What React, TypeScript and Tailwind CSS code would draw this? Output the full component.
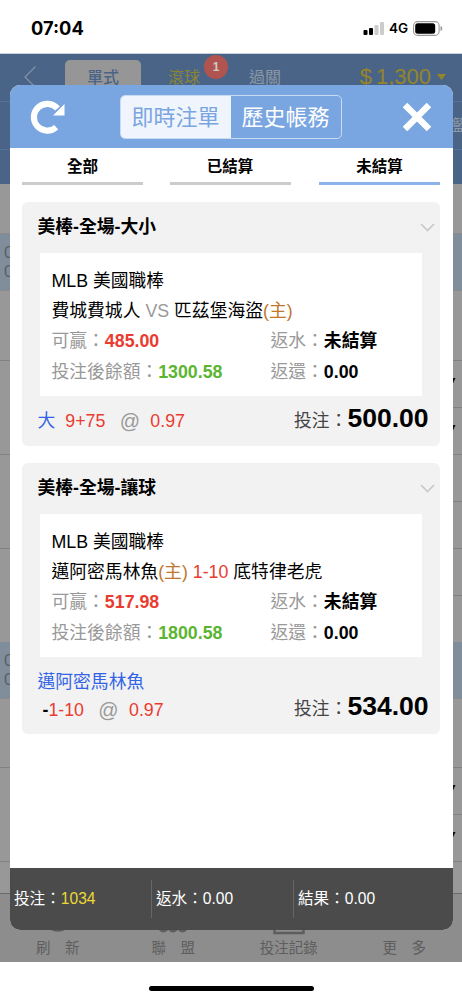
import { useState } from 'react'

type Bet = {
  id: string
  title: string
  league: string
  home: string
  away: string
  homeFirst: boolean
  score: string
  win: string
  balance: string
  pick: string
  line: string
  odds: string
  stake: string
}

const bets: Bet[] = [
  {
    id: 'a',
    title: '美棒-全場-大小',
    league: 'MLB 美國職棒',
    home: '匹茲堡海盜',
    away: '費城費城人',
    homeFirst: false,
    score: 'VS',
    win: '485.00',
    balance: '1300.58',
    pick: '大',
    line: '9+75',
    odds: '0.97',
    stake: '500.00',
  },
  {
    id: 'b',
    title: '美棒-全場-讓球',
    league: 'MLB 美國職棒',
    home: '邁阿密馬林魚',
    away: '底特律老虎',
    homeFirst: true,
    score: '1-10',
    win: '517.98',
    balance: '1800.58',
    pick: '邁阿密馬林魚',
    line: '1-10',
    odds: '0.97',
    stake: '534.00',
  },
]

const filters = ['全部', '已結算', '未結算']

function StatusBar() {
  return (
    <div className="flex h-[54px] items-start justify-between border-b border-[#c5d0dc] bg-white pl-[31px] pr-[19px] font-['Inter']">
      <span className="mt-[15px] text-[18.3px] font-bold leading-[26px] text-black">07:04</span>
      <div className="mt-[20px] flex h-4 items-center">
        <svg width="22" height="14" viewBox="0 0 22 14">
          <rect x="0.5" y="9" width="4" height="5" rx="1" fill="#000" />
          <rect x="6" y="7" width="4" height="7" rx="1" fill="#000" />
          <rect x="11.5" y="4" width="4" height="10" rx="1" fill="#ccc" />
          <rect x="17" y="1" width="4" height="13" rx="1" fill="#ccc" />
        </svg>
        <span className="ml-[4px] w-[19px] text-[13.5px] font-semibold text-black">4G</span>
        <svg className="ml-[5px]" width="30" height="15" viewBox="0 0 30 15">
          <rect x="0.6" y="0.6" width="25.5" height="13.8" rx="4" fill="none" stroke="#999" strokeWidth="1.1" />
          <rect x="2.2" y="2.2" width="20" height="10.6" rx="2.5" fill="#000" />
          <path d="M27.5 5v5c1.4-.5 1.8-1.5 1.8-2.5S28.9 5.5 27.5 5z" fill="#999" />
        </svg>
      </div>
    </div>
  )
}

function Band() {
  return (
    <div className="h-[56px] bg-[#808d9b] pl-[4px] pt-[9px] text-[17px] leading-[19px] text-[#5c6066]">
      <div>0</div>
      <div>0</div>
    </div>
  )
}

function OddsRow({ open }: { open?: boolean }) {
  return (
    <div className="flex h-[94px] justify-end border-t border-[#818181]">
      <div className="flex w-[11px] flex-col">
        <div className="flex-1 border-b border-[#818181] pt-[17px]">{open && <Caret />}</div>
        <div className="flex-1 pt-[17px]">{open && <Caret />}</div>
      </div>
    </div>
  )
}

function Caret() {
  return (
    <svg width="5" height="6" viewBox="0 0 5 6">
      <path d="M0 0h4.6L1.6 6H0z" fill="#111" />
    </svg>
  )
}

// dimmed betting page behind the sheet
function Backdrop() {
  return (
    <div className="bg-[#989898]">
      <div className="h-[130px] bg-[#4a6487]">
        <div className="flex h-[48px] border-b border-[#54719a] text-[16px] leading-[32px]">
          <svg className="ml-[23px] mt-[11px]" width="14" height="24" viewBox="0 0 14 24">
            <path d="M12.5 1.5L2 12l10.5 10.5" fill="none" stroke="#8290a3" strokeWidth="1.3" />
          </svg>
          <div className="ml-[28px] mt-[6px] w-[76px] rounded-t-[5px] bg-[#969696] pt-[2px] text-center font-medium text-[#4a6487]">單式</div>
          <div className="relative ml-[27px] mt-[8px] w-[33px] whitespace-nowrap text-[#8b8434]">
            滾球
            <span className="absolute left-[36px] top-[-7px] h-[24px] w-[24px] rounded-full bg-[#b1544f] text-center text-[12px] font-bold leading-[24px] text-[#ccc]">1</span>
          </div>
          <div className="ml-[48px] mt-[8px] text-[#8c97a6]">過關</div>
          <div className="ml-auto mr-[16px] mt-[7px] flex text-[22px] text-[#958528]">
            <span>$</span>
            <span className="ml-[4px]">1,300</span>
            <svg className="ml-[6px] mt-[13px]" width="9" height="6" viewBox="0 0 9 6">
              <path d="M0 0h9L4.5 6z" fill="#958528" />
            </svg>
          </div>
        </div>
        <div className="flex h-[48px] items-center justify-end border-b border-[#54719a]">
          <div className="w-[10px] whitespace-nowrap text-[16px] text-[#8c97a6]">籃</div>
        </div>
      </div>
      <div className="h-[50px] border-b border-[#8b8b8b]" />
      <Band />
      <div className="h-[70px] border-t border-[#8b8b8b]" />
      <OddsRow open />
      <OddsRow />
      <OddsRow />
      <Band />
      <div className="h-[69px] border-t border-[#8b8b8b]" />
      <OddsRow open />
      <div className="h-[32px] border-t border-[#818181]" />
      <div className="flex h-[69px] border-t border-[#6c6c6c] bg-[#8d8d8d] text-[14.5px] leading-[20px] text-[#5e5e5e]">
        <NavItem label="刷　新">
          <circle cx="17" cy="24" r="12.3" fill="none" stroke="#5e5e5e" strokeWidth="3" />
        </NavItem>
        <NavItem label="聯　盟">
          <g fill="none" stroke="#5e5e5e" strokeWidth="2.5">
            <circle cx="7.5" cy="33" r="4.2" />
            <circle cx="17" cy="33" r="4.2" />
            <circle cx="26.5" cy="33" r="4.2" />
          </g>
        </NavItem>
        <NavItem label="投注記錄">
          <rect x="2.5" y="8" width="29" height="31" fill="none" stroke="#5e5e5e" strokeWidth="2.5" />
        </NavItem>
        <NavItem label="更　多" />
      </div>
    </div>
  )
}

function NavItem({ label, children }: { label: string; children?: React.ReactNode }) {
  return (
    <div className="flex flex-1 flex-col items-center">
      <svg width="34" height="42" viewBox="0 0 34 42">{children}</svg>
      <span className="mt-[2px]">{label}</span>
    </div>
  )
}

function BetCard({ bet }: { bet: Bet }) {
  const home = (
    <>
      {bet.home}
      <span className="text-[#c0762c]">(主)</span>
    </>
  )
  const odds = (
    <>
      <span className="text-[#ea3b30]">{bet.line}</span>
      <span className="w-[45px] pl-[4px] text-center text-[20px] text-[#999]">@</span>
      <span className="text-[#ea3b30]">{bet.odds}</span>
    </>
  )

  return (
    <div className="rounded-[6px] bg-[#f2f2f2] text-[17.8px]">
      <div className="flex h-[51px] items-center justify-between pl-[15.5px] pr-[5px]">
        <h3 className="font-bold text-black">{bet.title}</h3>
        <svg width="15" height="9" viewBox="0 0 15 9">
          <path d="M1 1l6.5 6.5L14 1" fill="none" stroke="#c9c9c9" strokeWidth="1.7" />
        </svg>
      </div>
      <div className="mx-[18px] h-[143px] bg-white px-[11.5px] pt-[13px] leading-[30.2px] text-black">
        <div>{bet.league}</div>
        <div className="whitespace-nowrap">
          {bet.homeFirst ? home : bet.away}{' '}
          <span className={bet.homeFirst ? 'text-[#ea3b30]' : 'text-[#999]'}>{bet.score}</span>{' '}
          {bet.homeFirst ? bet.away : home}
        </div>
        <div className="grid grid-cols-[219px_1fr] whitespace-nowrap text-[#999]">
          <div>可贏：<b className="text-[#ea3b30]">{bet.win}</b></div>
          <div>返水：<b className="text-black">未結算</b></div>
          <div>投注後餘額：<b className="text-[#5bb531]">{bet.balance}</b></div>
          <div>返還：<b className="text-black">0.00</b></div>
        </div>
      </div>
      <div className={`flex justify-between pl-[15.5px] pr-[11.5px] leading-[28px] ${bet.homeFirst ? 'h-[77px] items-end pb-[10px]' : 'h-[50px] items-center'}`}>
        {bet.homeFirst ? (
          <div>
            <div className="h-[28px] text-[#3264e6]">{bet.pick}</div>
            <div className="flex h-[28px] pl-[5px]">
              <b className="text-black">-</b>
              {odds}
            </div>
          </div>
        ) : (
          <div className="flex">
            <span className="mr-[10px] text-[#3264e6]">{bet.pick}</span>
            {odds}
          </div>
        )}
        <div className={`flex h-[32px] items-baseline text-[#444] ${bet.homeFirst ? '' : 'mb-[2px]'}`}>
          投注：<b className="text-[26.5px] text-black">{bet.stake}</b>
        </div>
      </div>
    </div>
  )
}

function Summary({ label, value, highlight }: { label: string; value: string; highlight?: boolean }) {
  return (
    <div className="h-[38px] border-r border-[#666] pl-[4.5px] leading-[38px] last:border-r-0">
      {label}：<span className={highlight ? 'text-[#ecd935]' : ''}>{value}</span>
    </div>
  )
}

export default function App() {
  const [filter, setFilter] = useState('未結算')

  return (
    <div className="relative h-[1000px] w-[462px] overflow-hidden bg-white font-['Liberation_Sans','Noto_Sans_CJK_TC',sans-serif]">
      <StatusBar />
      <Backdrop />
      <div className="flex h-[38px] justify-center pt-[24px]">
        <div className="h-[5px] w-[165px] rounded-full bg-black" />
      </div>

      <div className="absolute left-[9.5px] top-[85px] flex h-[845px] w-[443px] flex-col overflow-hidden rounded-[10px] bg-white">
        <header className="flex h-[63px] shrink-0 items-center justify-between bg-[#79a5e0] pl-[19px] pr-[21px]">
          <button>
            <svg width="36" height="36" viewBox="0 0 36 36">
              <path d="M28.5 9.5A13.4 13.4 0 1 0 27.2 28.2" fill="none" stroke="#fff" strokeWidth="6.2" />
              <path d="M35.5 5v11.5H24z" fill="#fff" />
            </svg>
          </button>
          <div className="mr-[5px] flex h-[44px] w-[222px] overflow-hidden rounded-[5px] border border-[#c9dbf4] text-[22px]">
            <button className="w-[110px] bg-[#f0f5fd] pt-[2px] text-[#79a5e0]">即時注單</button>
            <button className="w-[110px] pt-[2px] text-white">歷史帳務</button>
          </div>
          <button>
            <svg width="30" height="30" viewBox="0 0 30 30">
              <path d="M3 3l24 24M27 3L3 27" stroke="#fff" strokeWidth="6.4" />
            </svg>
          </button>
        </header>

        <nav className="flex gap-[26.500px] px-[12.5px]">
          {filters.map(f => (
            <button
              key={f}
              onClick={() => setFilter(f)}
              className={`h-[37px] w-[121px] border-b-[3.5px] pt-[3px] text-[15.5px] font-bold leading-[32px] text-black last:ml-auto ${f === filter ? 'border-[#8db4ea]' : 'border-[#ccc]'}`}
            >
              {f}
            </button>
          ))}
        </nav>

        <div className="flex flex-1 flex-col gap-[17px] px-[12.5px] pt-[17px]">
          {bets.map(bet => (
            <BetCard key={bet.id} bet={bet} />
          ))}
        </div>

        <footer className="grid h-[62px] shrink-0 grid-cols-[142px_142px_1fr] items-center bg-[#4b4b4b] text-[15.6px] text-white">
          <Summary label="投注" value="1034" highlight />
          <Summary label="返水" value="0.00" />
          <Summary label="結果" value="0.00" />
        </footer>
      </div>
    </div>
  )
}
